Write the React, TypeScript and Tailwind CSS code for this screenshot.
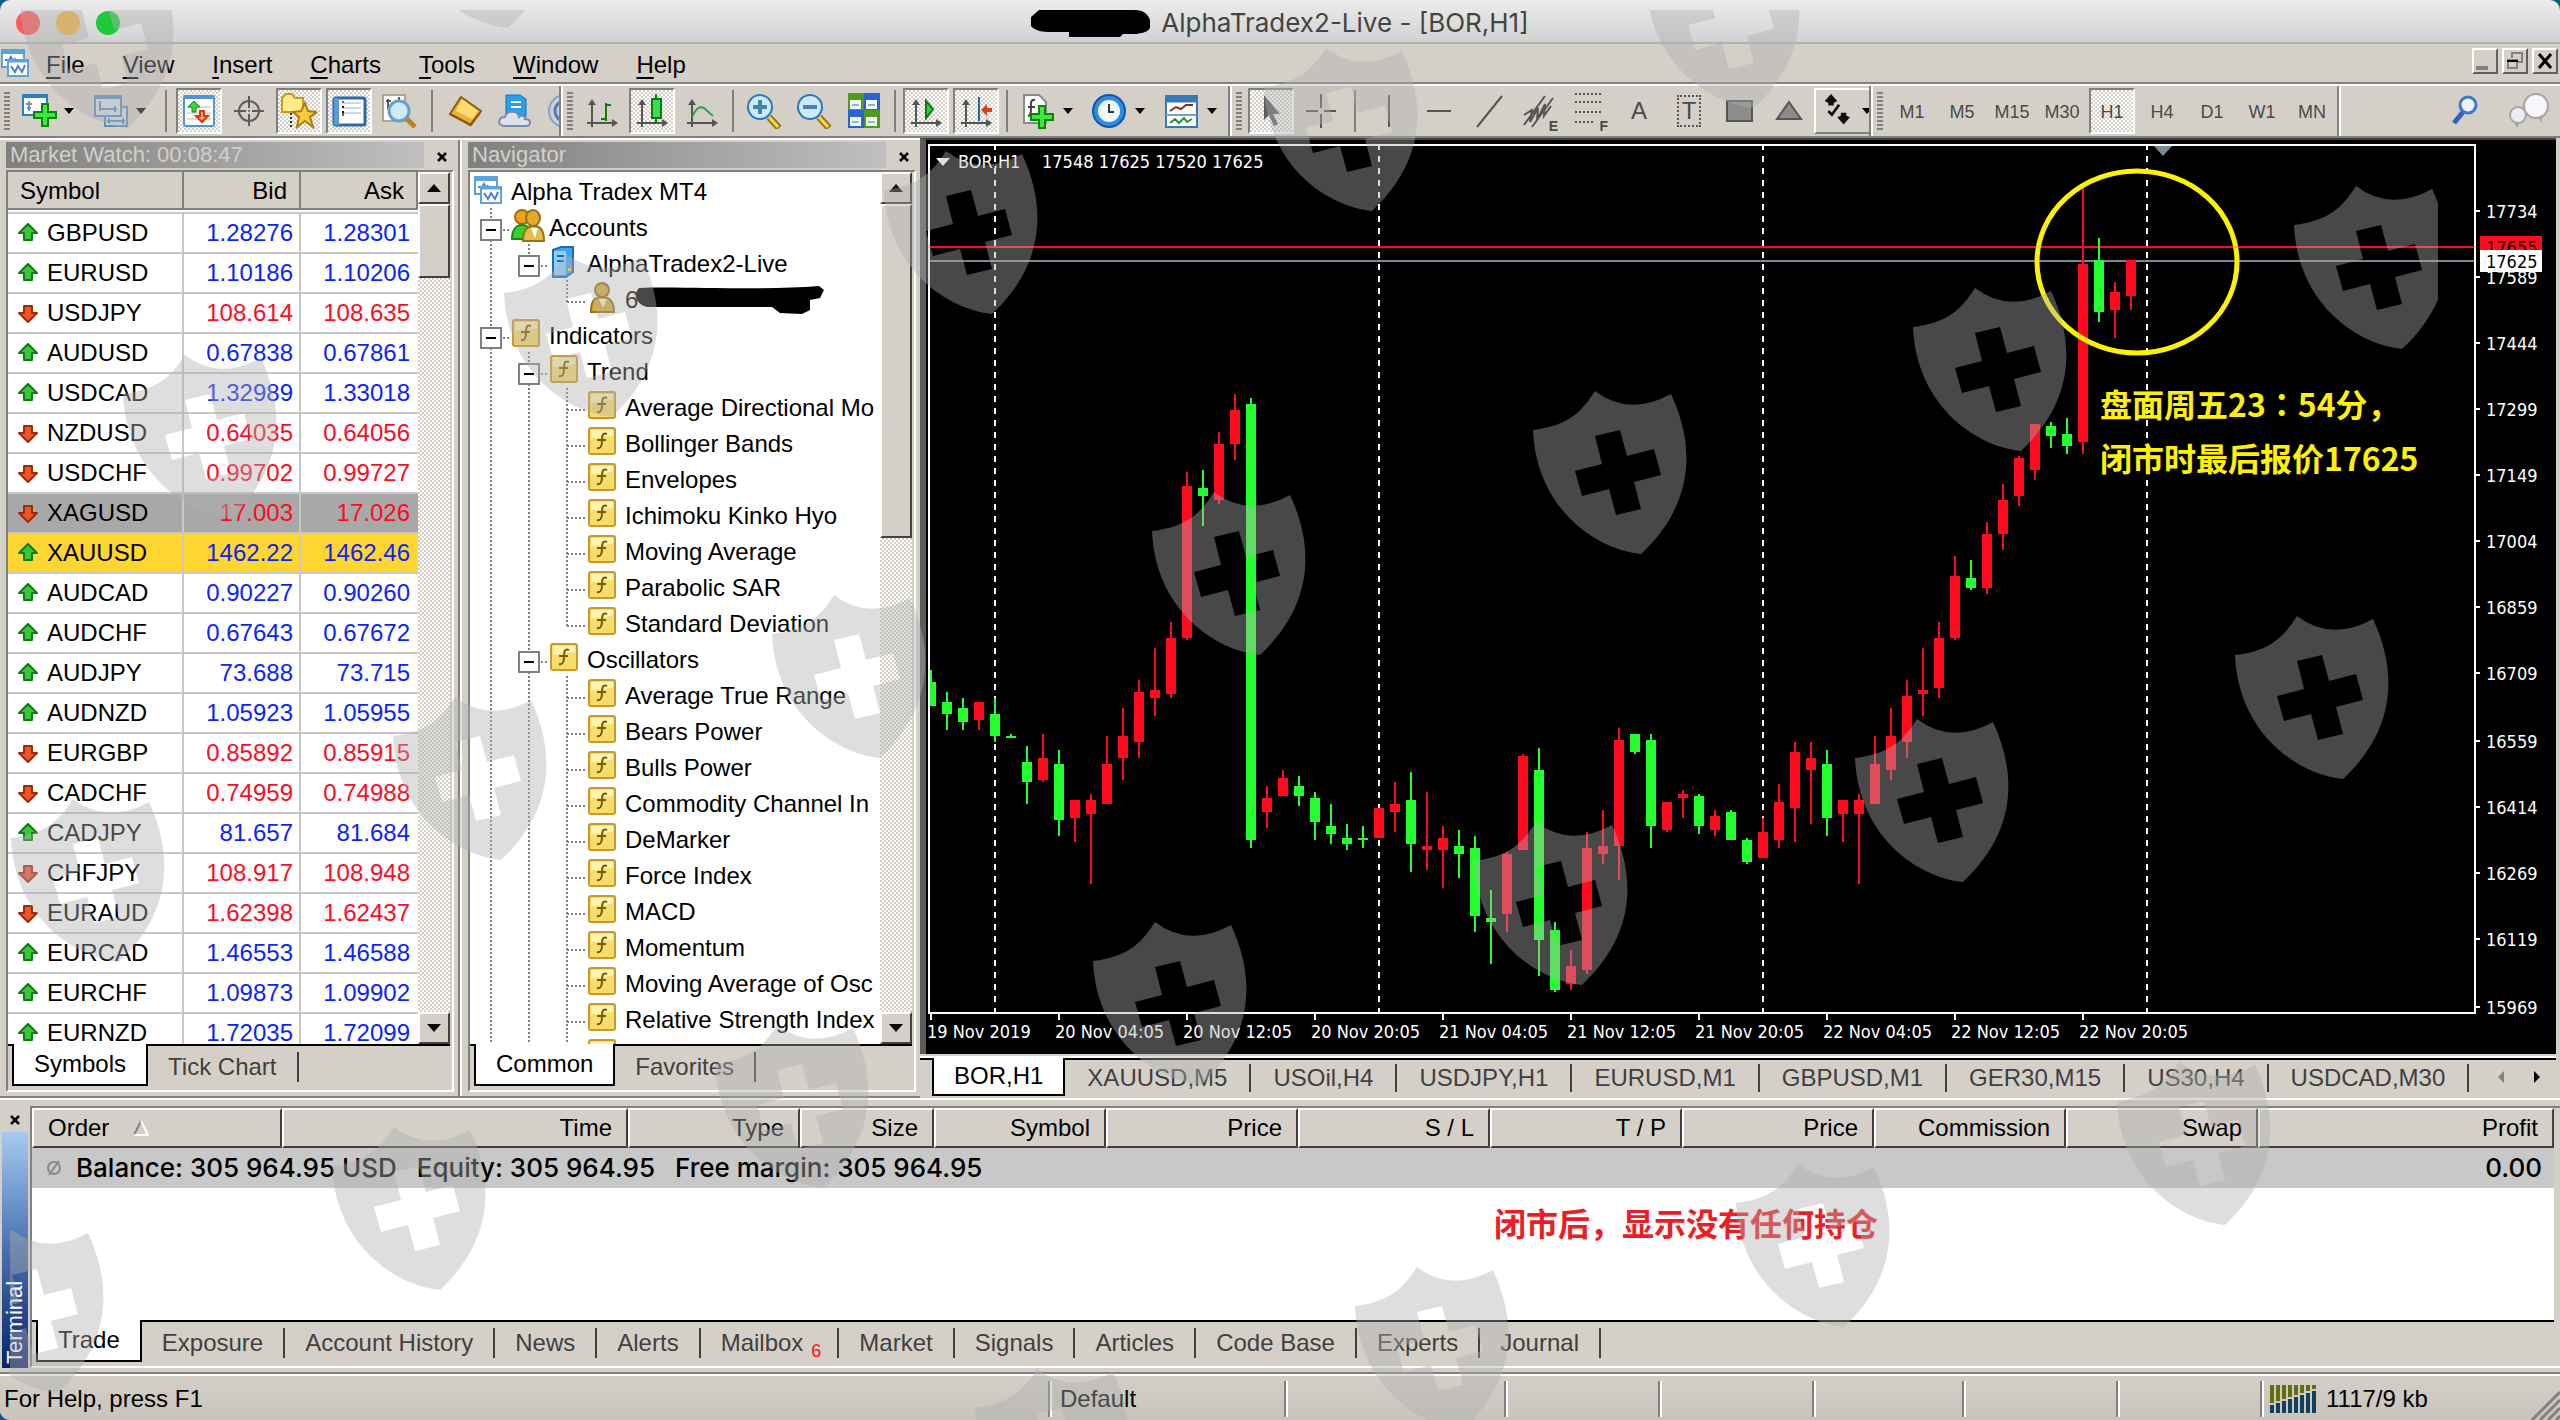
import type { ReactNode } from "react";
import clsx from "clsx";

const DITHER = "[background:repeating-conic-gradient(#ffffff_0_25%,#d4d0c8_0_50%)_0_0/4px_4px]";
const RAISED = "border-2 border-t-white border-l-white border-b-[#404040] border-r-[#404040] bg-[#d4d0c8]";

type Quote = { symbol: string; bid: string; ask: string; up: boolean; row?: string };

const QUOTES: Quote[] = [
  { symbol: "GBPUSD", bid: "1.28276", ask: "1.28301", up: true },
  { symbol: "EURUSD", bid: "1.10186", ask: "1.10206", up: true },
  { symbol: "USDJPY", bid: "108.614", ask: "108.635", up: false },
  { symbol: "AUDUSD", bid: "0.67838", ask: "0.67861", up: true },
  { symbol: "USDCAD", bid: "1.32989", ask: "1.33018", up: true },
  { symbol: "NZDUSD", bid: "0.64035", ask: "0.64056", up: false },
  { symbol: "USDCHF", bid: "0.99702", ask: "0.99727", up: false },
  { symbol: "XAGUSD", bid: "17.003", ask: "17.026", up: false, row: "bg-[#a8a8a8]" },
  { symbol: "XAUUSD", bid: "1462.22", ask: "1462.46", up: true, row: "bg-[#ffd530]" },
  { symbol: "AUDCAD", bid: "0.90227", ask: "0.90260", up: true },
  { symbol: "AUDCHF", bid: "0.67643", ask: "0.67672", up: true },
  { symbol: "AUDJPY", bid: "73.688", ask: "73.715", up: true },
  { symbol: "AUDNZD", bid: "1.05923", ask: "1.05955", up: true },
  { symbol: "EURGBP", bid: "0.85892", ask: "0.85915", up: false },
  { symbol: "CADCHF", bid: "0.74959", ask: "0.74988", up: false },
  { symbol: "CADJPY", bid: "81.657", ask: "81.684", up: true },
  { symbol: "CHFJPY", bid: "108.917", ask: "108.948", up: false },
  { symbol: "EURAUD", bid: "1.62398", ask: "1.62437", up: false },
  { symbol: "EURCAD", bid: "1.46553", ask: "1.46588", up: true },
  { symbol: "EURCHF", bid: "1.09873", ask: "1.09902", up: true },
  { symbol: "EURNZD", bid: "1.72035", ask: "1.72099", up: true },
];

// x of candle i is 931 + 16 * i; values are high, body top, body bottom, low
type Candle = [number, number, number, number, "r" | "g"];
const CANDLES: Candle[] = [
  [670, 682, 706, 706, "g"], [692, 702, 714, 730, "g"], [698, 708, 722, 730, "g"], [702, 702, 720, 730, "r"],
  [698, 714, 736, 742, "g"], [734, 736, 738, 738, "g"], [746, 762, 782, 804, "g"], [734, 758, 780, 782, "r"],
  [750, 764, 820, 836, "g"], [800, 800, 818, 842, "r"], [794, 800, 814, 884, "r"], [736, 764, 804, 804, "r"],
  [708, 736, 758, 780, "r"], [680, 692, 742, 758, "r"], [648, 690, 698, 716, "r"], [622, 638, 694, 698, "r"],
  [472, 486, 638, 640, "r"], [470, 488, 496, 526, "g"], [432, 444, 500, 504, "r"], [394, 410, 444, 460, "r"],
  [398, 404, 840, 848, "g"], [786, 798, 812, 828, "r"], [770, 778, 796, 796, "r"], [776, 786, 796, 806, "g"],
  [792, 798, 822, 840, "g"], [804, 826, 834, 844, "g"], [824, 838, 844, 850, "g"], [826, 838, 840, 848, "g"],
  [808, 808, 838, 838, "r"], [782, 804, 812, 832, "r"], [772, 800, 844, 872, "g"], [792, 846, 850, 870, "r"],
  [826, 838, 850, 888, "r"], [830, 846, 854, 878, "g"], [836, 848, 916, 932, "g"], [890, 918, 922, 964, "g"],
  [852, 854, 914, 932, "r"], [754, 756, 850, 850, "r"], [748, 770, 940, 976, "g"], [922, 930, 990, 992, "g"],
  [950, 966, 984, 990, "r"], [832, 848, 970, 974, "r"], [810, 846, 854, 864, "r"], [728, 740, 846, 880, "r"],
  [734, 734, 752, 754, "g"], [734, 740, 826, 848, "g"], [802, 802, 830, 832, "r"], [790, 794, 798, 818, "r"],
  [794, 796, 826, 834, "g"], [810, 816, 830, 836, "r"], [810, 812, 840, 840, "g"], [838, 840, 862, 864, "g"],
  [818, 832, 858, 858, "r"], [784, 802, 840, 848, "r"], [742, 752, 808, 842, "r"], [742, 758, 770, 824, "r"],
  [750, 764, 818, 836, "g"], [800, 800, 814, 842, "r"], [794, 800, 814, 884, "r"], [736, 764, 804, 804, "r"],
  [708, 736, 770, 780, "r"], [680, 696, 742, 758, "r"], [648, 690, 694, 716, "r"], [622, 638, 688, 698, "r"],
  [556, 576, 638, 640, "r"], [560, 578, 588, 590, "g"], [522, 534, 588, 594, "r"], [484, 500, 534, 550, "r"],
  [456, 458, 496, 506, "r"], [424, 424, 470, 480, "r"], [422, 426, 436, 448, "g"], [418, 434, 446, 454, "g"],
  [188, 264, 442, 454, "r"], [238, 260, 312, 322, "g"], [282, 292, 310, 338, "r"], [260, 260, 296, 310, "r"],
];

const PRICES: [string, number][] = [
  ["17734", 211], ["17589", 277], ["17444", 343], ["17299", 409], ["17149", 475], ["17004", 541], ["16859", 607],
  ["16709", 673], ["16559", 741], ["16414", 807], ["16269", 873], ["16119", 939], ["15969", 1007],
];

const DATES = [
  "19 Nov 2019", "20 Nov 04:05", "20 Nov 12:05", "20 Nov 20:05", "21 Nov 04:05",
  "21 Nov 12:05", "21 Nov 20:05", "22 Nov 04:05", "22 Nov 12:05", "22 Nov 20:05",
];

/* ---------- toolbar icons ---------- */

function Svg({ children, size = 36 }: { children: ReactNode; size?: number }) {
  return (
    <svg width={size} height={size} viewBox="0 0 36 36" fill="none" className="shrink-0">
      {children}
    </svg>
  );
}

const plus = <path d="M19 13h6v8h8v6h-8v8h-6v-8h-8v-6h8z" fill="#3fe83f" stroke="#0b860b" strokeWidth="2" />;
const axes = (
  <>
    <path d="M8 34V8M3 30h29" stroke="#555" strokeWidth="2" />
    <path d="M4 12l4-6 4 6zM28 26l6 4-6 4z" fill="#555" />
  </>
);

function NewChartIcon() {
  return (
    <Svg>
      <rect x="2" y="2" width="24" height="20" fill="#fff" stroke="#2f7fc4" strokeWidth="2" />
      <path d="M1 3h26" stroke="#2f7fc4" strokeWidth="4" />
      <path d="M8 8v10M5 11h6M6 15h4" stroke="#6d95b5" strokeWidth="2" />
      <g transform="translate(2 -2)">{plus}</g>
    </Svg>
  );
}

function ProfilesIcon() {
  return (
    <Svg>
      <rect x="12" y="14" width="22" height="19" fill="#d5dde4" stroke="#5d8fbd" strokeWidth="2" />
      <path d="M14 28h18M16 25v6M30 25v6" stroke="#5d8fbd" strokeWidth="2" />
      <rect x="2" y="3" width="26" height="20" fill="#d9e1e8" stroke="#5d8fbd" strokeWidth="2" />
      <path d="M1 4h28" stroke="#5d8fbd" strokeWidth="4" />
      <path d="M7 8v10M6 16h18M22 13v6" stroke="#5d8fbd" strokeWidth="2" />
    </Svg>
  );
}

function MarketWatchIcon() {
  return (
    <Svg>
      <rect x="3" y="3" width="30" height="30" rx="2" fill="#fff" stroke="#4f97d8" strokeWidth="2" />
      <path d="M3 4h30" stroke="#4f97d8" strokeWidth="4" />
      <path d="M6 14h24M6 20h24M6 26h24" stroke="#dcdcdc" strokeWidth="2" />
      <path d="M13 8l6 6h-4v5h-4v-5H7z" fill="#3fd63f" stroke="#0b860b" />
      <path d="M21 29l6-6h-4v-5h-4v5h-4z" fill="#ff9a6a" stroke="#d33a12" strokeWidth="2" />
    </Svg>
  );
}

function TargetIcon() {
  return (
    <Svg>
      <circle cx="18" cy="18" r="10" stroke="#5c5c5c" strokeWidth="2" />
      <path d="M18 3v12M18 21v12M3 18h12M21 18h12" stroke="#5c5c5c" strokeWidth="2" />
      <circle cx="18" cy="18" r="1" fill="#5c5c5c" />
    </Svg>
  );
}

function NavigatorIcon() {
  return (
    <Svg>
      <path d="M1 5l4-4h6l3 4h8v14H1z" fill="#ffeb8a" stroke="#c79a1c" strokeWidth="2" />
      <path d="M10 20v14" stroke="#333" strokeWidth="2" strokeDasharray="2 2" />
      <path d="M24 10l3 8 9 1-7 5 3 10-8-6-8 6 2-10-6-5 8-1z" fill="#f5cd3a" stroke="#b07c10" strokeWidth="2" />
    </Svg>
  );
}

function TerminalIcon() {
  return (
    <Svg>
      <rect x="3" y="5" width="31" height="27" rx="2" fill="#fff" stroke="#2c68ac" strokeWidth="3" />
      <rect x="3" y="5" width="5" height="27" fill="#5a9ad8" />
      <path d="M12 10h18M12 15h18M12 20h18" stroke="#c9d7f3" strokeWidth="2" />
      <path d="M12 8v12" stroke="#111" strokeWidth="2" strokeDasharray="2 3" />
      <path d="M12 8v2M12 20v3" stroke="#f22" strokeWidth="2" />
    </Svg>
  );
}

function TesterIcon() {
  return (
    <Svg>
      <rect x="2" y="2" width="22" height="26" fill="#fff" stroke="#aaa691" strokeWidth="2" />
      <path d="M7 6v10M5 8h5M18 4v8" stroke="#555" strokeWidth="2" />
      <path d="M25 25l9 9" stroke="#b98716" strokeWidth="5" />
      <circle cx="18" cy="18" r="10" fill="#cfeaff" stroke="#6f9dc9" strokeWidth="3" />
    </Svg>
  );
}

function BookIcon() {
  return (
    <Svg>
      <path d="M14 4l20 14-10 14L3 21z" fill="#e9b23a" stroke="#8e5d0c" strokeWidth="2" />
      <path d="M15 6l16 12-6 8L9 18z" fill="#ffdb70" />
      <path d="M3 21l20 11 10-12" stroke="#8e5d0c" strokeWidth="2" />
    </Svg>
  );
}

function CloudIcon() {
  return (
    <Svg>
      <path d="M9 2h14l6 4v18H9z" fill="#29a0ee" stroke="#1673c0" />
      <path d="M14 9h10M14 14h10" stroke="#fff" strokeWidth="2" />
      <path d="M7 33c-7-1-6-9 1-9 1-7 13-7 14 0 3-3 7 0 6 2 7 0 6 7 1 7z" fill="#dbe3f0" stroke="#7c8aa8" strokeWidth="2" />
    </Svg>
  );
}

function SignalIcon() {
  return (
    <Svg>
      <circle cx="18" cy="18" r="16" stroke="#7ea4d8" strokeWidth="2" />
      <circle cx="18" cy="18" r="10" stroke="#4a7fc4" strokeWidth="3" />
    </Svg>
  );
}

function BarsIcon() {
  return (
    <Svg>
      {axes}
      <path d="M22 10v18M22 12h5M17 26h5" stroke="#0c7c0c" strokeWidth="2" />
    </Svg>
  );
}

function CandlesIcon() {
  return (
    <Svg>
      {axes}
      <path d="M22 1v30" stroke="#0c7c0c" strokeWidth="2" />
      <rect x="18" y="6" width="9" height="19" fill="#36dc5a" stroke="#0c7c0c" strokeWidth="2" />
    </Svg>
  );
}

function LineChartIcon() {
  return (
    <Svg>
      {axes}
      <path d="M8 24c5-10 8-11 12-9l9 8" stroke="#2fa044" strokeWidth="2" />
    </Svg>
  );
}

function ZoomIcon({ sign }: { sign: "in" | "out" }) {
  return (
    <Svg>
      <path d="M23 24l10 11" stroke="#9b7412" strokeWidth="7" />
      <path d="M23 24l9 10" stroke="#f5d85a" strokeWidth="3" />
      <circle cx="14" cy="14" r="12" fill="#cbeaff" stroke="#2e77ba" strokeWidth="2" />
      <path d={sign === "in" ? "M7 14h14M14 7v14" : "M7 14h14"} stroke="#4583a9" strokeWidth="4" />
    </Svg>
  );
}

function TileIcon() {
  return (
    <Svg>
      <path d="M2 0h16v17H2zM18 17h16v18H18z" fill="#4d9c1f" />
      <path d="M18 0h16v17H18zM2 17h16v18H2z" fill="#2d63cc" />
      <path d="M4 7h11v9H4zM20 7h11v9H20zM4 24h11v9H4zM20 24h11v9H20z" fill="#f4fbf4" />
      <path d="M6 12h7M22 12h7M6 29h7M22 29h7" stroke="#8ab4d8" strokeWidth="2" />
    </Svg>
  );
}

function AutoScrollIcon() {
  return (
    <Svg>
      {axes}
      <path d="M18 8l7 8-7 9z" fill="#35c94e" stroke="#0c7c0c" strokeWidth="2" />
    </Svg>
  );
}

function ShiftIcon() {
  return (
    <Svg>
      {axes}
      <path d="M21 4v24" stroke="#1d6da8" strokeWidth="2" />
      <path d="M23 17l6-6v4h5v4h-5v4z" fill="#d1431b" />
    </Svg>
  );
}

function IndicatorIcon() {
  return (
    <Svg>
      <path d="M4 2h15l7 7v21H4z" fill="#fff" stroke="#8a8a8a" strokeWidth="2" />
      <path d="M15 7c-5-1-4 4-4 8s0 8-3 8M8 14h7" stroke="#444" strokeWidth="2" />
      {plus}
    </Svg>
  );
}

function ClockIcon() {
  return (
    <Svg>
      <circle cx="17" cy="18" r="16" fill="#2d8ce6" stroke="#1458a4" strokeWidth="2" />
      <circle cx="17" cy="18" r="11" fill="#f0f5fa" />
      <path d="M17 11v8h5" stroke="#333" strokeWidth="2" />
    </Svg>
  );
}

function TemplateIcon() {
  return (
    <Svg>
      <rect x="2" y="3" width="31" height="31" fill="#fff" stroke="#3978b8" strokeWidth="2" />
      <path d="M1 6h33" stroke="#3978b8" strokeWidth="7" />
      <path d="M2 22h31" stroke="#7a9cc0" strokeWidth="2" />
      <path d="M6 18l6-4 5 2 5-4h7" stroke="#8d2b12" strokeWidth="2" />
      <path d="M6 30l5-4 4 4 5-5 3 4 5-3" stroke="#2b8d38" strokeWidth="2" />
    </Svg>
  );
}

function CursorIcon() {
  return (
    <Svg>
      <path d="M11 2v25l5-5 5 11 4-2-5-10h7z" fill="#5b5b5b" />
    </Svg>
  );
}

function ShapesIcon() {
  return (
    <Svg>
      <path d="M10 1l7 8-4 2v3H7v-3L3 9zM24 35l-7-8 4-2v-3h6v3l4 2z" fill="#111" />
      <path d="M7 20l4 4 8-11" stroke="#111" strokeWidth="3" />
    </Svg>
  );
}

/* ---------- toolbar ---------- */

function ToolButton({ label, pressed, children }: { label: string; pressed?: boolean; children: ReactNode }) {
  return (
    <button
      aria-label={label}
      className={clsx(
        "mx-[2px] flex h-[46px] w-[46px] shrink-0 items-center justify-center border-2 text-lg text-[#4a4a4a]",
        pressed ? "border-t-[#808080] border-l-[#808080] border-r-white border-b-white" : "border-transparent",
        pressed && DITHER,
      )}
    >
      {children}
    </button>
  );
}

function SplitButton({ label, children }: { label: string; children: ReactNode }) {
  return (
    <button aria-label={label} className="flex w-[72px] shrink-0 items-center gap-[7px] pl-[7px]">
      {children}
      <span className="border-x-[5px] border-t-[6px] border-x-transparent border-t-black" />
    </button>
  );
}

function Sep({ className = "mx-[7px]" }: { className?: string }) {
  return <span className={clsx("h-[42px] w-[2px] shrink-0 bg-[#808080]", className)} />;
}

function Grip() {
  return (
    <span className="mr-1 ml-1 h-[38px] w-[6px] shrink-0 bg-[repeating-linear-gradient(#808080_0_2px,transparent_2px_4px)]" />
  );
}

function Bar({ className, children }: { className?: string; children: ReactNode }) {
  return (
    <div className={clsx("flex shrink-0 items-center overflow-hidden border-r-2 border-r-[#808080]", className)}>
      {children}
    </div>
  );
}

function Toolbar() {
  return (
    <div className="flex h-[54px] shrink-0 border-t-2 border-b-2 border-t-white border-b-[#808080]">
      <Bar className="w-[561px]">
        <Grip />
        <SplitButton label="New chart"><NewChartIcon /></SplitButton>
        <SplitButton label="Profiles"><ProfilesIcon /></SplitButton>
        <Sep />
        <ToolButton label="Market Watch" pressed><MarketWatchIcon /></ToolButton>
        <ToolButton label="Data Window"><TargetIcon /></ToolButton>
        <ToolButton label="Navigator" pressed><NavigatorIcon /></ToolButton>
        <ToolButton label="Terminal" pressed><TerminalIcon /></ToolButton>
        <ToolButton label="Strategy Tester"><TesterIcon /></ToolButton>
        <Sep />
        <ToolButton label="MetaEditor"><BookIcon /></ToolButton>
        <ToolButton label="Hosting"><CloudIcon /></ToolButton>
        <ToolButton label="Signals"><SignalIcon /></ToolButton>
      </Bar>
      <Bar className="w-[669px] border-l-2 border-l-white">
        <Grip />
        <ToolButton label="Bar chart"><BarsIcon /></ToolButton>
        <ToolButton label="Candlesticks" pressed><CandlesIcon /></ToolButton>
        <ToolButton label="Line chart"><LineChartIcon /></ToolButton>
        <Sep className="mx-[5px]" />
        <ToolButton label="Zoom in"><ZoomIcon sign="in" /></ToolButton>
        <ToolButton label="Zoom out"><ZoomIcon sign="out" /></ToolButton>
        <ToolButton label="Tile windows"><TileIcon /></ToolButton>
        <Sep className="mx-[5px]" />
        <ToolButton label="Auto scroll" pressed><AutoScrollIcon /></ToolButton>
        <ToolButton label="Chart shift" pressed><ShiftIcon /></ToolButton>
        <Sep className="mx-[5px]" />
        <SplitButton label="Indicators"><IndicatorIcon /></SplitButton>
        <SplitButton label="Periods"><ClockIcon /></SplitButton>
        <SplitButton label="Templates"><TemplateIcon /></SplitButton>
      </Bar>
      <Bar className="w-[641px] border-l-2 border-l-white">
        <Grip />
        <ToolButton label="Cursor" pressed><CursorIcon /></ToolButton>
        <ToolButton label="Crosshair">
          <Svg><path d="M18 1v14M18 21v14M3 18h12M21 18h12" stroke="#555" strokeWidth="2" /></Svg>
        </ToolButton>
        <Sep className="mx-2" />
        <ToolButton label="Vertical line"><Svg><path d="M18 2v32" stroke="#555" strokeWidth="2" /></Svg></ToolButton>
        <ToolButton label="Horizontal line"><Svg><path d="M6 18h24" stroke="#555" strokeWidth="2" /></Svg></ToolButton>
        <ToolButton label="Trendline"><Svg><path d="M6 34L31 3" stroke="#555" strokeWidth="2" /></Svg></ToolButton>
        <ToolButton label="Equidistant channel">
          <span className="relative">
            <Svg>
              <path d="M3 32L24 3M11 34L32 5M3 22l8-5-2 12 8-14-1 12 8-16-1 12 7-10" stroke="#555" strokeWidth="2" />
            </Svg>
            <span className="absolute -right-px -bottom-1 text-sm leading-none font-bold">E</span>
          </span>
        </ToolButton>
        <ToolButton label="Fibonacci">
          <span className="relative">
            <Svg>
              <path d="M4 1h28M4 9h28M4 19h28M4 29h20" stroke="#555" strokeWidth="2" strokeDasharray="2 2" />
            </Svg>
            <span className="absolute -right-px -bottom-1 text-sm leading-none font-bold">F</span>
          </span>
        </ToolButton>
        <ToolButton label="Text"><span className="text-2xl">A</span></ToolButton>
        <ToolButton label="Text label">
          <span className="border-2 border-dotted border-[#555] px-[3px] text-2xl leading-7">T</span>
        </ToolButton>
        <ToolButton label="Rectangle">
          <Svg><rect x="6" y="8" width="25" height="20" fill="#8c8c8c" stroke="#555" strokeWidth="2" /></Svg>
        </ToolButton>
        <ToolButton label="Triangle">
          <Svg><path d="M18 9l12 17H6z" fill="#8c8c8c" stroke="#555" strokeWidth="2" /></Svg>
        </ToolButton>
        <button
          aria-label="Arrows"
          className="flex h-[46px] w-[56px] shrink-0 items-center gap-1 overflow-hidden border-y-2 border-l-2 border-t-white border-b-[#808080] border-l-white pl-[6px]"
        >
          <Svg><g transform="scale(.9)"><ShapesIcon /></g></Svg>
          <span className="border-x-[5px] border-t-[6px] border-x-transparent border-t-black" />
        </button>
      </Bar>
      <Bar className="border-l-2 border-l-white">
        <Grip />
        {["M1", "M5", "M15", "M30", "H1", "H4", "D1", "W1", "MN"].map((tf) => (
          <ToolButton key={tf} label={tf} pressed={tf === "H1"}>
            <span className="pt-[2px]">{tf}</span>
          </ToolButton>
        ))}
      </Bar>
      <div className="flex flex-1 items-center justify-end gap-[22px] border-l-2 border-l-white pr-[10px]">
        <button aria-label="Search">
          <Svg>
            <path d="M15 19L6 30" stroke="#2f62bd" strokeWidth="5" />
            <circle cx="20" cy="12" r="8" fill="#eef4fd" stroke="#4077d3" strokeWidth="3" />
          </Svg>
        </button>
        <button aria-label="Chat">
          <svg width="44" height="36" viewBox="0 0 44 36">
            <path d="M31 22l5 8-1-9z" fill="#999" />
            <circle cx="30" cy="13" r="12" fill="#f7f7fb" stroke="#a5a5a5" strokeWidth="2" />
            <path d="M8 28l3 7 2-7z" fill="#999" />
            <circle cx="12" cy="22" r="8" fill="#ececf4" stroke="#a5a5a5" strokeWidth="2" />
          </svg>
        </button>
      </div>
    </div>
  );
}

/* ---------- shared panel parts ---------- */

function AppIcon() {
  return (
    <svg width="30" height="30" viewBox="0 0 30 30" fill="none" className="shrink-0">
      <rect x="2" y="2" width="22" height="17" fill="#fff" stroke="#5aa3e0" strokeWidth="2" />
      <path d="M1 4h24" stroke="#5aa3e0" strokeWidth="4" />
      <path d="M5 12h4l2-3 2 5 2-4" stroke="#4a7fd0" strokeWidth="2" />
      <rect x="8" y="12" width="20" height="16" fill="#fff" stroke="#5aa3e0" strokeWidth="2" />
      <path d="M7 13h22" stroke="#5aa3e0" strokeWidth="3" />
      <path d="M11 18l4 6 3-6 4 6 3-7" stroke="#4a7fd0" strokeWidth="2" />
    </svg>
  );
}

function CloseX() {
  return (
    <svg width="12" height="12" viewBox="0 0 12 12">
      <path d="M2 2l8 8M10 2l-8 8" stroke="#000" strokeWidth="2.5" />
    </svg>
  );
}

function Caption({ title }: { title: string }) {
  return (
    <div className="flex h-[26px] shrink-0 items-stretch">
      <h2 className="flex-1 bg-linear-to-r from-[#808080] to-[#c0c0c0] pl-1 text-[22px] leading-[26px] text-[#d4d0c8]">
        {title}
      </h2>
      <button aria-label={"Close " + title} className="flex w-[30px] items-center justify-center pt-1 pl-[6px]">
        <CloseX />
      </button>
    </div>
  );
}

function ScrollBar({ thumb }: { thumb: string }) {
  return (
    <div className={clsx("flex w-[32px] shrink-0 flex-col", DITHER)}>
      <button aria-label="Scroll up" className={clsx("flex h-[32px] items-center justify-center", RAISED)}>
        <span className="border-x-[7px] border-b-[8px] border-x-transparent border-b-black" />
      </button>
      <div className={clsx("shrink-0", RAISED, thumb)} />
      <div className="flex-1" />
      <button aria-label="Scroll down" className={clsx("flex h-[32px] items-center justify-center", RAISED)}>
        <span className="border-x-[7px] border-t-[8px] border-x-transparent border-t-black" />
      </button>
    </div>
  );
}

function PanelTabs({ active, other }: { active: string; other: string }) {
  return (
    <div className="flex h-[46px] shrink-0 items-start border-t-2 border-black pl-1">
      <button className="-mt-[2px] h-[42px] border-2 border-t-0 border-black bg-white px-5 text-2xl">{active}</button>
      <button className="mt-[6px] h-[30px] border-r-2 border-[#404040] px-5 text-2xl leading-[26px] text-[#404040]">
        {other}
      </button>
    </div>
  );
}

function Panel({ title, className, children }: { title: string; className?: string; children: ReactNode }) {
  return (
    <section className={clsx("flex w-[460px] shrink-0 flex-col pt-[2px] pr-1 pb-1 pl-[6px]", className)}>
      <Caption title={title} />
      <div className="mt-[2px] flex min-h-0 flex-1 flex-col border-2 border-t-[#808080] border-r-white border-b-white border-l-[#808080] pr-[2px]">
        {children}
      </div>
    </section>
  );
}

/* ---------- market watch ---------- */

function QuoteArrow({ up }: { up: boolean }) {
  return (
    <svg width="22" height="22" viewBox="0 0 22 22" className={clsx("shrink-0", !up && "rotate-180")}>
      <path
        d="M11 2l9 9h-5v7H7v-7H2z"
        fill={up ? "#38c63a" : "#f0552a"}
        stroke={up ? "#0f7d14" : "#9e2a0c"}
        strokeWidth="2"
        strokeLinejoin="round"
      />
    </svg>
  );
}

function HeadCell({ className, children }: { className: string; children: ReactNode }) {
  return (
    <th className={clsx("border-b-2 border-[#c8c8c8] bg-white p-0 font-normal", className)}>
      <div className="mb-[2px] h-[38px] border-r-2 border-b-2 border-[#808080] bg-[#d4d0c8] px-3 leading-[38px]">{children}</div>
    </th>
  );
}

function MarketWatch() {
  return (
    <Panel title="Market Watch: 00:08:47" className="border-r-2 border-[#808080]">
      <div className="flex min-h-0 flex-1">
        <div className="flex-1 overflow-hidden bg-white">
          <table className="w-full table-fixed border-separate border-spacing-0 text-2xl">
            <thead>
              <tr>
                <HeadCell className="w-[176px] text-left">Symbol</HeadCell>
                <HeadCell className="w-[117px] text-right">Bid</HeadCell>
                <HeadCell className="text-right">Ask</HeadCell>
              </tr>
            </thead>
            <tbody>
              {QUOTES.map((q) => (
                <tr key={q.symbol} className={clsx("h-[40px]", q.row)}>
                  <td className="border-r-2 border-b-2 border-[#c8c8c8] p-0">
                    <div className="flex items-center gap-2 pl-[9px] leading-[38px]">
                      <QuoteArrow up={q.up} />
                      {q.symbol}
                    </div>
                  </td>
                  <td
                    className={clsx(
                      "border-r-2 border-b-2 border-[#c8c8c8] p-0 pr-[6px] text-right leading-[38px]",
                      q.up ? "text-[#0a24ff]" : "text-[#ff0a1e]",
                    )}
                  >
                    {q.bid}
                  </td>
                  <td
                    className={clsx(
                      "border-b-2 border-[#c8c8c8] p-0 pr-2 text-right leading-[38px]",
                      q.up ? "text-[#0a24ff]" : "text-[#ff0a1e]",
                    )}
                  >
                    {q.ask}
                  </td>
                </tr>
              ))}
            </tbody>
          </table>
        </div>
        <ScrollBar thumb="h-[74px]" />
      </div>
      <PanelTabs active="Symbols" other="Tick Chart" />
    </Panel>
  );
}

/* ---------- navigator ---------- */

type GuideKind = "blank" | "line" | "tee" | "end" | "box" | "boxEnd";

function Guide({ kind }: { kind: GuideKind }) {
  const stop = kind === "end" || kind === "boxEnd";
  const box = kind === "box" || kind === "boxEnd";
  return (
    <svg width="38" height="36" fill="none" stroke="#808080" strokeWidth="2" className="shrink-0">
      {kind !== "blank" && <path d={stop ? "M19 0V22" : "M19 0V36"} strokeDasharray="2 2" />}
      {kind !== "blank" && kind !== "line" && <path d="M19 22H38" strokeDasharray="2 2" />}
      {box && <rect x="9" y="12" width="20" height="20" fill="#fff" />}
      {box && <path d="M14 22h10" stroke="#000" />}
    </svg>
  );
}

function FnIcon() {
  return (
    <svg width="30" height="30" viewBox="0 0 30 30" fill="none">
      <rect x="2" y="1" width="26" height="26" rx="2" fill="#f6dd6c" stroke="#c99a2b" strokeWidth="2" />
      <path d="M4 12V3h22v6z" fill="#fff3b0" />
      <path d="M20 7c-5-2-5 3-5 7s-1 8-5 7M10 13h9" stroke="#7c5a08" strokeWidth="2" />
    </svg>
  );
}

function PersonIcon() {
  return (
    <svg width="30" height="32" viewBox="0 0 30 32">
      <circle cx="15" cy="8" r="7" fill="#d9ac35" stroke="#94711a" strokeWidth="2" />
      <path d="M4 30c0-9 2-15 11-15s12 6 12 15z" fill="#d9ac35" stroke="#94711a" strokeWidth="2" />
      <path d="M12 17l4 9 4-9z" fill="#fff3c8" />
    </svg>
  );
}

function AccountsIcon() {
  return (
    <svg width="36" height="34" viewBox="0 0 36 34">
      <circle cx="11" cy="8" r="7" fill="#efa01c" stroke="#a56a08" strokeWidth="2" />
      <path d="M1 30c0-9 4-14 10-14s10 5 10 14z" fill="#37cf2e" stroke="#168a12" strokeWidth="2" />
      <ellipse cx="22" cy="9" rx="7" ry="8" fill="#e0aa2a" stroke="#94711a" strokeWidth="2" />
      <path d="M12 32c0-10 4-15 11-15s10 5 10 15z" fill="#e6bd48" stroke="#94711a" strokeWidth="2" />
      <path d="M20 19l4 10 3-10z" fill="#fff" />
    </svg>
  );
}

function ServerIcon() {
  return (
    <svg width="30" height="32" viewBox="0 0 30 32">
      <path d="M4 4l8-3h12v25l-7 5H4z" fill="#42a5ea" stroke="#1b6cb4" strokeWidth="2" />
      <path d="M5 5h12v24H5z" fill="#8fd0fb" />
      <path d="M8 10h7M8 15h7" stroke="#1b6cb4" strokeWidth="2" />
      <path d="M19 22h3v3h-3z" fill="#ffd84a" />
    </svg>
  );
}

type TreeRow = { label: string; guides: GuideKind[]; icon?: "app" | "accounts" | "server" | "person" };

const leaf = (label: string): TreeRow => ({ label, guides: ["line", "line", "tee"] });

const TREE: TreeRow[] = [
  { label: "Alpha Tradex MT4", guides: [], icon: "app" },
  { label: "Accounts", guides: ["box"], icon: "accounts" },
  { label: "AlphaTradex2-Live", guides: ["line", "boxEnd"], icon: "server" },
  { label: "6", guides: ["line", "blank", "end"], icon: "person" },
  { label: "Indicators", guides: ["box"] },
  { label: "Trend", guides: ["line", "box"] },
  ...[
    "Average Directional Mo",
    "Bollinger Bands",
    "Envelopes",
    "Ichimoku Kinko Hyo",
    "Moving Average",
    "Parabolic SAR",
  ].map(leaf),
  { label: "Standard Deviation", guides: ["line", "line", "end"] },
  { label: "Oscillators", guides: ["line", "box"] },
  ...[
    "Average True Range",
    "Bears Power",
    "Bulls Power",
    "Commodity Channel In",
    "DeMarker",
    "Force Index",
    "MACD",
    "Momentum",
    "Moving Average of Osc",
    "Relative Strength Index",
    "",
  ].map(leaf),
];

function TreeIcon({ icon }: { icon?: TreeRow["icon"] }) {
  if (icon === "app") return <AppIcon />;
  if (icon === "accounts") return <AccountsIcon />;
  if (icon === "server") return <ServerIcon />;
  if (icon === "person") return <PersonIcon />;
  return <FnIcon />;
}

function Navigator() {
  return (
    <Panel title="Navigator" className="border-l-2 border-white">
      <div className="flex min-h-0 flex-1">
        <ul className="min-w-0 flex-1 overflow-hidden bg-white pl-[2px] text-2xl">
          {TREE.map((row, i) => (
            <li key={i} className="flex h-[36px] items-center whitespace-nowrap">
              {row.guides.map((g, n) => (
                <Guide key={n} kind={g} />
              ))}
              <span className="w-[38px] shrink-0 pl-px">
                <TreeIcon icon={row.icon} />
              </span>
              <span className="relative pt-[3px] pl-px leading-9">
                {row.label}
                {row.icon === "person" && (
                  <svg width="190" height="32" className="absolute top-1 left-[11px]">
                    <path
                      d="M4 5c40-2 120 3 180-2l5 4-4 8-10 2v10l-8 4-22-1-8-6H12C4 22-4 14 4 5z"
                      fill="#000"
                    />
                  </svg>
                )}
              </span>
            </li>
          ))}
        </ul>
        <ScrollBar thumb="h-[334px]" />
      </div>
      <PanelTabs active="Common" other="Favorites" />
    </Panel>
  );
}

/* ---------- chart ---------- */

const AXIS_TEXT = "font-['DejaVu_Sans_Condensed','DejaVu_Sans',sans-serif] text-lg";

function Plot() {
  return (
    <svg className={clsx("h-full w-full", AXIS_TEXT)}>
      <g transform="translate(-930 -146)">
        {[995, 1379, 1763, 2147].map((x) => (
          <line key={x} x1={x} x2={x} y1="144" y2="1012" stroke="#fff" strokeWidth="2" strokeDasharray="6 6" />
        ))}
        <path d="M930 247H2480" stroke="#ff0a1e" strokeWidth="2" />
        <path d="M930 261H2480" stroke="#778899" strokeWidth="2" />
        {CANDLES.map(([high, top, bottom, low, c], i) => {
          const x = 931 + 16 * i;
          return (
            <g key={i} fill={c === "r" ? "#ff0a1e" : "#26ff2e"}>
              <rect x={x - 1} y={high} width="2" height={low - high} />
              <rect x={x - 5} y={top} width="10" height={bottom - top} />
            </g>
          );
        })}
        <path d="M936 158h14l-7 8z" fill="#fff" />
        <path d="M2154 146h18l-9 10z" fill="#778899" />
        <g fill="#fff">
          <text x="958" y="168">BOR,H1</text>
          <text x="1042" y="168">17548 17625 17520 17625</text>
        </g>
        <ellipse cx="2137" cy="262" rx="100" ry="91" fill="none" stroke="#fff200" strokeWidth="5" />
        <g fill="#fff200" className="font-['Noto_Sans_CJK_SC',sans-serif] text-[32px] font-bold">
          <text x="2100" y="417">
            盘面周五23<tspan className="font-['Noto_Sans_CJK_TC',sans-serif]">：</tspan>54分，
          </text>
          <text x="2100" y="471">闭市时最后报价17625</text>
        </g>
      </g>
    </svg>
  );
}

function PriceAxis() {
  return (
    <svg width="80" className={clsx("h-full shrink-0", AXIS_TEXT)}>
      <g transform="translate(-2476 -144)">
        {PRICES.map(([label, y]) => (
          <g key={label} fill="#fff">
            <rect x="2476" y={y - 1} width="4" height="2" />
            <text x="2486" y={y + 7}>{label}</text>
          </g>
        ))}
        <rect x="2480" y="236" width="62" height="22" fill="#ff0a1e" />
        <text x="2486" y="254" fill="#000">17655</text>
        <rect x="2480" y="250" width="62" height="22" fill="#fff" />
        <text x="2486" y="268" fill="#000">17625</text>
      </g>
    </svg>
  );
}

function DateAxis() {
  return (
    <svg className={clsx("block h-[40px] w-full", AXIS_TEXT)} fill="#fff">
      <g transform="translate(-928 -1014)">
        {DATES.map((label, i) => (
          <g key={label}>
            <rect x={930 + 128 * i} y="1014" width="2" height="6" />
            <text x={927 + 128 * i} y="1038">{label}</text>
          </g>
        ))}
      </g>
    </svg>
  );
}

const CHART_TABS = ["XAUUSD,M5", "USOil,H4", "USDJPY,H1", "EURUSD,M1", "GBPUSD,M1", "GER30,M15", "US30,H4", "USDCAD,M30"];

function ChartWindow() {
  return (
    <section className="flex min-w-0 flex-1 flex-col pr-1">
      <div className="flex min-h-0 flex-1 flex-col border-t-2 border-l-[6px] border-t-[#404040] border-l-[#5c5c5c] bg-black pt-1 pl-[2px]">
        <div className="flex min-h-0 flex-1">
          <div className="min-w-0 flex-1 overflow-hidden border-2 border-white">
            <Plot />
          </div>
          <PriceAxis />
        </div>
        <DateAxis />
      </div>
      <div className="mt-[2px] h-[2px] shrink-0 bg-white" />
      <div className="flex h-[40px] shrink-0 border-t-2 border-black pl-3">
        <button className="-mt-[2px] h-[38px] border-2 border-t-0 border-black bg-white px-5 text-2xl leading-9">BOR,H1</button>
        {CHART_TABS.map((t) => (
          <button key={t} className="mt-1 h-[28px] border-r-2 border-[#404040] px-[22px] text-2xl leading-7 text-[#404040]">
            {t}
          </button>
        ))}
        <div className="ml-auto flex items-center gap-[30px] pr-[16px] pb-1">
          <button aria-label="Previous tabs" className="border-y-[6px] border-r-[6px] border-y-transparent border-r-[#808080]" />
          <button aria-label="Next tabs" className="border-y-[6px] border-l-[6px] border-y-transparent border-l-black" />
        </div>
      </div>
    </section>
  );
}

/* ---------- terminal ---------- */

const ORDER_COLUMNS: [string, string][] = [
  ["Time", "w-[346px]"],
  ["Type", "w-[172px]"],
  ["Size", "w-[134px]"],
  ["Symbol", "w-[172px]"],
  ["Price", "w-[192px]"],
  ["S / L", "w-[192px]"],
  ["T / P", "w-[192px]"],
  ["Price", "w-[192px]"],
  ["Commission", "w-[192px]"],
  ["Swap", "w-[192px]"],
  ["Profit", ""],
];

const TERMINAL_TABS = [
  "Exposure", "Account History", "News", "Alerts", "Mailbox", "Market", "Signals", "Articles", "Code Base", "Experts", "Journal",
];

const ORDER_HEAD =
  "h-[40px] border-t-2 border-r-2 border-b-2 border-l-2 border-t-white border-l-white border-r-[#404040] border-b-[#404040] bg-[#d4d0c8] px-[14px] py-0 font-normal";

function Terminal() {
  return (
    <section className="flex h-[274px] shrink-0 border-t-2 border-white">
      <div className="flex w-[30px] shrink-0 flex-col items-center pt-[14px] pb-1">
        <button aria-label="Close Terminal">
          <CloseX />
        </button>
        <h2 className="mt-[6px] flex w-[26px] flex-1 rotate-180 items-center bg-linear-to-t from-[#a6caf0] via-[#4a6fb0] to-[#0a246a] pt-1 text-[22px] leading-[26px] text-white [writing-mode:vertical-rl]">
          Terminal
        </h2>
      </div>
      <div className="mt-[6px] mb-1 flex min-w-0 flex-1 flex-col border-t-2 border-b-2 border-l-2 border-t-[#808080] border-b-white border-l-[#808080] pr-[6px]">
        <div className="relative min-h-0 flex-1 bg-white">
          <table className="w-full table-fixed border-separate border-spacing-0 text-2xl">
            <thead>
              <tr>
                <th className={clsx(ORDER_HEAD, "w-[250px] text-left")}>
                  <span className="flex items-center gap-6">
                    Order
                    <svg width="16" height="16" viewBox="0 0 16 16" fill="none">
                      <path d="M8 1L1 15" stroke="#808080" strokeWidth="2" />
                      <path d="M8 1l7 14H1" stroke="#fff" strokeWidth="2" />
                    </svg>
                  </span>
                </th>
                {ORDER_COLUMNS.map(([label, width], i) => (
                  <th key={i} className={clsx(ORDER_HEAD, "text-right", width)}>
                    {label}
                  </th>
                ))}
              </tr>
            </thead>
            <tbody>
              <tr className="bg-[#c8c8c8] font-['Inter',sans-serif] text-[26px] leading-9 font-medium">
                <td colSpan={11} className="h-[40px] p-0 pl-[14px]">
                  <span className="flex items-center gap-[14px]">
                    <svg width="16" height="20" viewBox="0 0 16 20" fill="none" stroke="#8a8a8a" strokeWidth="2">
                      <circle cx="8" cy="10" r="6" />
                      <path d="M3 17L13 3" />
                    </svg>
                    <span className="flex gap-5">
                      <span>Balance: 305 964.95 USD</span>
                      <span>Equity: 305 964.95</span>
                      <span>Free margin: 305 964.95</span>
                    </span>
                  </span>
                </td>
                <td className="p-0 pr-3 text-right">0.00</td>
              </tr>
            </tbody>
          </table>
          <p className="absolute top-[90px] left-[1462px] font-['Noto_Sans_CJK_SC',sans-serif] text-[32px] leading-[48px] font-bold whitespace-nowrap text-[#ee1c24]">
            闭市后，显示没有任何持仓
          </p>
        </div>
        <div className="flex h-[46px] shrink-0 border-t-2 border-black pl-1">
          <button className="-mt-[2px] h-[42px] border-2 border-t-0 border-black bg-white px-5 text-2xl">Trade</button>
          {TERMINAL_TABS.map((t) => (
            <button
              key={t}
              className="mt-[6px] flex h-[30px] items-center border-r-2 border-[#404040] px-5 text-2xl text-[#404040]"
            >
              {t}
              {t === "Mailbox" && <span className="-mr-1 self-end pl-2 text-lg leading-[14px] text-[#ff0a1e]">6</span>}
            </button>
          ))}
        </div>
      </div>
    </section>
  );
}

/* ---------- status bar ---------- */

function StatusBar() {
  const cell = "h-[36px] shrink-0 border-l-2 border-[#808080] shadow-[inset_2px_0_#fff]";
  return (
    <footer className="flex h-[48px] shrink-0 items-center border-t-2 border-[#808080] bg-linear-to-b from-[#d4d0c8] to-[#c8c4bc] pt-1 text-2xl shadow-[inset_0_2px_#fff]">
      <span className="min-w-0 flex-1 pl-1">For Help, press F1</span>
      <span className={clsx(cell, "w-[236px] pl-[10px] leading-9")}>Default</span>
      <span className={clsx(cell, "w-[220px]")} />
      <span className={clsx(cell, "w-[154px]")} />
      <span className={clsx(cell, "w-[154px]")} />
      <span className={clsx(cell, "w-[150px]")} />
      <span className={clsx(cell, "w-[154px]")} />
      <span className={clsx(cell, "w-[144px]")} />
      <span className={clsx(cell, "flex w-[270px] items-center gap-2 pl-2")}>
        <svg width="48" height="28">
          {[0, 1, 2, 3, 4, 5, 6, 7].map((n) => (
            <g key={n}>
              <rect x={n * 6} y="0" width="4" height={18 - n * 2} fill="#5c7010" />
              <rect x={n * 6} y={20 - n * 2} width="4" height={8 + n * 2} fill="#10405c" />
            </g>
          ))}
        </svg>
        1117/9 kb
      </span>
      <svg width="30" height="32" className="shrink-0 self-end">
        <path d="M2 32L30 4M10 32l20-20M18 32l12-12M26 32l4-4" stroke="#808080" strokeWidth="3" />
      </svg>
    </footer>
  );
}

/* ---------- title + menu ---------- */

function TitleBar() {
  return (
    <header className="relative flex h-[44px] shrink-0 items-center justify-center rounded-t-[10px] border-b-2 border-[#b1b1b1] bg-linear-to-b from-[#ececec] to-[#d2d2d2] pt-1">
      <div className="absolute left-4 flex gap-4">
        <button aria-label="Close" className="h-6 w-6 rounded-full bg-[#fc5b57]" />
        <button aria-label="Minimize" className="h-6 w-6 rounded-full bg-[#f5b43c]" />
        <button aria-label="Zoom" className="h-6 w-6 rounded-full bg-[#1fc93c]" />
      </div>
      <svg width="120" height="28" className="mr-[10px]">
        <path d="M8 1h96c8 0 13 4 15 10v8c-3 5-9 5-14 6H92l-3 3H38V23H20c-8 0-16-1-20-6V8z" fill="#000" />
      </svg>
      <h1 className="font-['Inter',sans-serif] text-[26px] leading-8 text-[#444]">AlphaTradex2-Live - [BOR,H1]</h1>
    </header>
  );
}

function MenuBar() {
  const btn = "flex h-[26px] w-[26px] items-center justify-center border-2 border-t-white border-l-white border-r-[#606060] border-b-[#606060]";
  return (
    <nav className="flex h-[40px] shrink-0 items-center border-b-2 border-[#808080] text-2xl">
      <AppIcon />
      <div className="flex gap-[38px] pt-1 pl-4">
        {["File", "View", "Insert", "Charts", "Tools", "Window", "Help"].map((m) => (
          <button key={m}>
            <span className="underline decoration-2 underline-offset-4">{m[0]}</span>
            {m.slice(1)}
          </button>
        ))}
      </div>
      <div className="ml-auto flex gap-1 self-start pt-1 pr-[2px]">
        <button aria-label="Minimize chart" className={clsx(btn, "items-end justify-start")}>
          <span className="m-[2px] h-1 w-3 bg-[#808080]" />
        </button>
        <button aria-label="Restore chart" className={btn}>
          <svg width="18" height="20" viewBox="0 0 18 20" fill="none" stroke="#808080" strokeWidth="2">
            <path d="M6 7V2h10v9h-4" />
            <path d="M2 9h9v8H2z" />
            <path d="M1 10h11" stroke="#000" strokeWidth="2" />
          </svg>
        </button>
        <button aria-label="Close chart" className={btn}>
          <svg width="18" height="18" viewBox="0 0 18 18">
            <path d="M3 2l12 14M15 2L3 16" stroke="#000" strokeWidth="3" />
          </svg>
        </button>
      </div>
    </nav>
  );
}

/* ---------- watermark ---------- */

const SHIELDS: [number, number][] = [
  [20, -35], [400, -135], [1646, -55], [1264, 48], [884, 151], [2294, 186], [1913, 288], [504, 254], [123, 355],
  [1533, 391], [1152, 492], [772, 595], [2235, 616], [393, 697], [1855, 719], [11, 799], [1474, 822], [1093, 922],
  [715, 1025], [2117, 1062], [332, 1127], [1736, 1164], [-50, 1230], [1355, 1267], [975, 1369],
];

function Watermark() {
  return (
    <svg className="pointer-events-none absolute inset-0 h-full w-full" aria-hidden="true">
      <clipPath id="mark-area">
        <rect x="10" y="10" width="2428" height="1410" />
      </clipPath>
      <g clipPath="url(#mark-area)" fill="#b0b0b0" fillOpacity=".41" fillRule="evenodd">
        {SHIELDS.map(([x, y]) => (
          <path
            key={x + ":" + y}
            transform={`translate(${x} ${y})`}
            d="M62 0Q96 26 138 3C160 50 165 110 108 163C60 158 3 115 0 39C34 35 48 22 62 0ZM62 45L87 39L94 65L121 58L128 84L101 91L108 118L83 124L76 98L49 105L42 80L69 73Z"
          />
        ))}
      </g>
    </svg>
  );
}

export default function App() {
  return (
    <div className="relative flex h-screen w-full flex-col overflow-hidden bg-[#0b5a84] font-['Liberation_Sans',Arial,sans-serif] text-black">
      <TitleBar />
      <div className="flex min-h-0 flex-1 flex-col overflow-hidden rounded-bl-[10px] bg-[#d4d0c8]">
        <MenuBar />
        <Toolbar />
        <main className="flex min-h-0 flex-1">
          <div className="flex shrink-0 border-t-2 border-b-2 border-t-white border-b-[#808080]">
            <MarketWatch />
            <Navigator />
          </div>
          <ChartWindow />
        </main>
        <Terminal />
        <StatusBar />
      </div>
      <Watermark />
    </div>
  );
}
